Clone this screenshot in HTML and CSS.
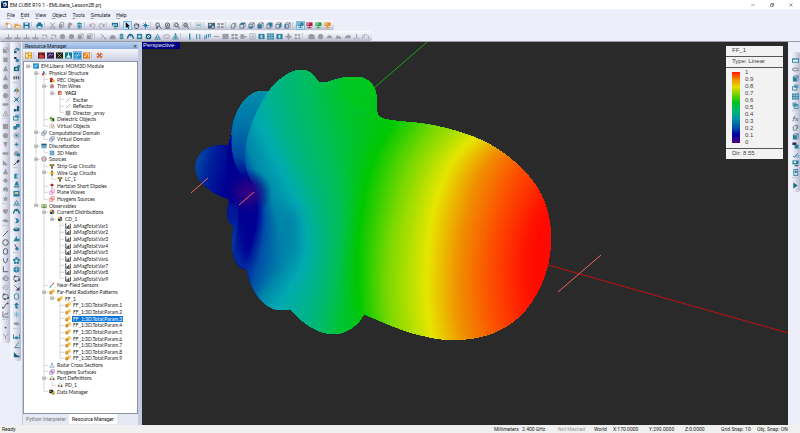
FILE: index.html
```html
<!DOCTYPE html>
<html lang="en">
<head>
<meta charset="utf-8">
<title>EM.CUBE R19.1 - EMLibera_Lesson2B.prj</title>
<link rel="stylesheet" href="styles.css">
</head>
<body>
<div class="app">
  <header class="titlebar">
    <svg class="logo" viewBox="0 0 16 16"><path fill="#0b2d5c" d="M0 0h16v16H0z"/><path fill="#3d8fd0" d="M0 0h5v4H0z"/><path fill="#fff" d="M5 5l5-2 3 2v5l-4 3-4-2z"/><path fill="#0b2d5c" d="M6 6l4 1v4l-4-1z"/></svg>
    <h1>EM.CUBE R19.1 - EMLibera_Lesson2B.prj</h1>
    <div class="window-buttons">
      <button aria-label="Minimize"><svg viewBox="0 0 16 16"><path class="line" d="M1 8h14"/></svg></button>
      <button aria-label="Restore"><svg viewBox="0 0 16 16"><path class="line" d="M2 5h9v9H2zM5 5V2h9v9h-3"/></svg></button>
      <button aria-label="Close"><svg viewBox="0 0 16 16"><path class="line" d="M2 2l12 12M14 2L2 14"/></svg></button>
    </div>
  </header>
  <nav class="menubar">
    <button><u>F</u>ile</button><button><u>E</u>dit</button><button><u>V</u>iew</button><button><u>O</u>bject</button><button><u>T</u>ools</button><button><u>S</u>imulate</button><button><u>H</u>elp</button>
  </nav>
  <div class="toolbar" data-icons="new open save | print | cut:g copy:g paste:g trash | undo:g redo:g | screen | arrow:sel hand:k orbit | zoom:k zoomdot:k zoombox:k zoomin:k | view | shade grid:g | home cubeA cubeB cubeC cubeD cubeE cubeF | board:sel board:red board:green board:orange"></div>
  <div class="toolbar" data-icons="base:g base:g base:g base:g hook:g hook:g ball:g ball:g box:g box:g | snip:g car:g cyl wave ring torus prism loop:g cone | bar pair bars dash:g block:g grid:g plug:g frame:g panel mesh panel cross:g dots:g | case:g blob:g dome:g hills:g ramp:g stand:g arch:g"></div>

  <main class="workspace">
    <div class="toolbar vertical" data-icons="box:g drum:g tri:g tri:g ball:g blob:g pill:g peak:g | square:g ball:g pin:g pill:g slope:g tri:g gem:g swirl:g star:g | heart:g leaf:g | line:k ring2:k oval:k vee:k ell:k swirl2:k swirl2:g poly:k curve:k graph:k | dot:k funnel:g"></div>
    <div class="toolbar vertical second" data-icons="move turn shape nums:k | mirror explode corner pages merge eye spark half needle | cut3 lamp picture prism wave moon pill2 slope2 spoon | flower globe poly:k resize:k oval pinup snow leaf:g | span angle hillb"></div>

    <section class="dock">
      <header class="dock-title"><h2>Resource Manager</h2><button aria-label="Close panel">✕</button></header>
      <div class="dock-tools" data-icons="m-gold | m-red m-purple m-dark m-teal m-blue:sel m-orange | m-wheel"></div>
      <ul class="tree" id="tree"></ul>
      <div class="tabs"><button>Python Interpreter</button><button class="active">Resource Manager</button></div>
    </section>

    <section class="viewport">
      <svg class="scene" viewBox="142 42 646 383" preserveAspectRatio="xMidYMid slice">
        <defs>
          <clipPath id="body"><path d="M263 91 L269 91 C278 80 290 70 301 70 C314 70 316 83 322 83 C328 83 340 76 354 77 C366 77 371 81 374 88 C379 99 376 104 377 112 C379 120 387 120 407 122 C434 124 458 130 483 141 C507 153 527 171 538 189 C547 204 551 222 551 240 C550 268 541 290 527 308 C510 329 485 340 453 340 C420 338 398 329 364 314 C358 326 346 334 333 334 C316 333 303 323 290 309 C274 313 264 305 257 295 C251 286 249 279 247 270 C236 267 232 257 232 245 C231 239 233 232 233 226 C226 222 227 213 227 210 C228 204 230 202 228 199 C215 195 206 188 200 181 C193 172 194 159 202 152 C209 145 219 145 228 146 C233 134 230 129 235 117 C241 102 251 91 263 91z"/></clipPath>
          <linearGradient id="side" gradientUnits="userSpaceOnUse" x1="250" y1="92" x2="247" y2="188"><stop offset="0" stop-color="#008cac"/><stop offset=".35" stop-color="#0074a8"/><stop offset=".68" stop-color="#0048a2"/><stop offset=".9" stop-color="#000090"/></linearGradient>
          <linearGradient id="tail" gradientUnits="userSpaceOnUse" x1="196" y1="165" x2="229" y2="174"><stop offset="0" stop-color="#0048a2"/><stop offset=".4" stop-color="#00209c"/><stop offset="1" stop-color="#000090"/></linearGradient>
          <radialGradient id="core" gradientUnits="userSpaceOnUse" cx="248" cy="193" r="24"><stop offset="0" stop-color="#360082"/><stop offset=".4" stop-color="#260084" stop-opacity=".8"/><stop offset="1" stop-color="#000090" stop-opacity="0"/></radialGradient>
          <filter id="soft" x="-50%" y="-50%" width="200%" height="200%"><feGaussianBlur stdDeviation="7"/></filter>
          <filter id="softer" x="-50%" y="-50%" width="200%" height="200%"><feGaussianBlur stdDeviation="12"/></filter>
        </defs>
        <path stroke="#14a814" d="M374 88L427 42"/>
        <path stroke="#c01010" d="M548 265L788 333"/>
        <g clip-path="url(#body)">
          <g id="contours"></g>
          <ellipse cx="358" cy="88" rx="20" ry="24" fill="#00c818" filter="url(#softer)"/>
          <ellipse cx="350" cy="325" rx="14" ry="10" fill="#00c428" filter="url(#soft)"/>
          <ellipse cx="288" cy="232" rx="9" ry="26" fill="#0080a8" filter="url(#soft)"/>
          <path d="M228 226C228 250 234 266 250 276" fill="none" stroke="#0060a8" stroke-width="8" filter="url(#soft)"/>
          <path fill="url(#tail)" d="M190 140h38L235 180 L230 204H190z"/>
          <path fill="url(#side)" d="M269 90C256 110 245 135 245 155C245 171 249 178 256 188C246 184 233 168 230 145C226 120 235 86 269 90z"/>
          <path fill="#000090" d="M228 144L232 134C229 160 241 182 256 190L232 204L226 190z"/>
          <circle cx="248" cy="193" r="24" fill="url(#core)" />
        </g>
        <path stroke="#f06464" d="M191 193L208 178M239 205L254 192M558 292L601 255"/>
      </svg>
      <span class="view-name">Perspective</span>
      <aside class="legend">
        <div class="legend-row">FF_1</div>
        <div class="legend-row">Type: Linear</div>
        <div class="legend-scale"><div class="ramp"></div>
          <ol><li>1</li><li>0.9</li><li>0.8</li><li>0.7</li><li>0.6</li><li>0.5</li><li>0.4</li><li>0.3</li><li>0.2</li><li>0.1</li><li>0</li></ol></div>
        <div class="legend-row">Dir: 8.55</div>
      </aside>
    </section>

    <div class="toolbar vertical right" data-icons="window ring3:g solid pages mesh layers | fx:k home solid pic2 tool board2 phone | play"></div>
  </main>

  <footer class="status">
    <span class="ready">Ready</span><span class="c28">Millimeters</span><span class="c36">2.400 GHz</span><span class="c36 off">Not Meshed</span><span class="c20">World</span><span class="c36">X:170.0000</span><span class="c36">Y:290.0000</span><span class="c36">Z:0.0000</span><span class="c36">Grid Snap: 10</span><span class="c42">Obj. Snap: ON</span>
  </footer>
</div>
<script src="app.js"></script>
</body>
</html>
```
FILE: styles.css
```css
* { box-sizing: border-box; }
html, body { height: 100%; margin: 0; }
body { font: 5px/6px Roboto, "Open Sans", sans-serif; color: #222; overflow: hidden; }
button { font: inherit; color: inherit; background: none; border: 0; padding: 0; margin: 0; }
h1, h2 { margin: 0; font: inherit; }
ul, ol { list-style: none; margin: 0; padding: 0; }
svg { display: block; }
.line { fill: none; stroke: #333; stroke-width: 2; }

.app { height: 100%; display: flex; flex-direction: column; background: #eceefa; }

.titlebar { display: flex; align-items: center; height: 9px; background: #fff; padding-left: 1px; }
.logo { width: 7px; height: 7px; margin-right: 2px; }
.window-buttons { margin-left: auto; display: flex; }
.window-buttons button { width: 19px; display: flex; justify-content: center; }
.window-buttons svg { width: 4px; height: 4px; }

.menubar { display: flex; align-items: center; gap: 6px; height: 11px; padding-left: 7px; border-top: 1px solid #f6f7fd; }
.menubar u { text-underline-offset: 1px; text-decoration-thickness: 1px; text-decoration-color: #9a9aa8; }

.toolbar { align-self: flex-start; display: flex; align-items: center; height: 10px; margin-bottom: 1px; padding: 0 2px 0 4px; border-radius: 2px;
  background: linear-gradient(#fafafe, #e4e6f2 50%, #b9bccf); }
.toolbar button { width: 9px; height: 9px; display: flex; align-items: center; justify-content: center; color: #28809f; flex: none; }
.toolbar svg { width: 7px; height: 7px; }
.sep { width: 4px; height: 7px; flex: none; border-left: 1px solid #c4c7d6; border-right: 1px solid transparent; background-clip: padding-box; }
.toolbar + .toolbar { margin-bottom: 0; }
.toolbar + .toolbar .sep { width: 5px; }
.toolbar button.g { color: #989aa0; }
.toolbar button.k { color: #44505c; }
.toolbar button.red { color: #b01838; }
.toolbar button.green { color: #28a048; }
.toolbar button.orange { color: #e08a18; }
.toolbar button.sel, .dock-tools button.sel { background: #cde6fa; outline: 1px solid #78b8ec; outline-offset: -1px; }

.workspace { flex: 1; min-height: 0; display: flex; align-items: stretch; border-top: 1px solid #9c9ca4; }
.toolbar.vertical { flex-direction: column; width: 10px; height: auto; margin: 0; padding: 4px 0 2px;
  background: linear-gradient(90deg, #fafafe, #dfe1ee 50%, #b9bccf); }
.toolbar.vertical .sep { width: 7px; height: 4px; border: 0; border-top: 1px solid #c4c7d6; }
.toolbar.second { margin-left: 1px; }
.toolbar.right { margin: 10px 0 0 2px; }

.dock { width: 120px; flex: none; display: flex; flex-direction: column; margin-left: 1px; padding: 0 4px 0 1px; background: #c3cbe0; }
.dock-title { display: flex; align-items: center; justify-content: space-between; height: 7px; padding: 0 1px 0 2px; background: linear-gradient(#bdd3f2, #8fb0de); }
.dock-tools { display: flex; align-items: center; height: 12px; padding-left: 1px; background: linear-gradient(#f4f5fb, #ccd0e2); }
.dock-tools button { width: 9px; height: 9px; display: flex; align-items: center; justify-content: center; }
.dock-tools svg { width: 7px; height: 7px; }
.tree { flex: 1; min-height: 0; display: grid; grid-auto-rows: 1fr; padding: 1px 0 18px; background: #fff; border: 1px solid #8c94a8;
  font: 5px/6px Lato, "Liberation Sans", sans-serif; color: #222; }
.tree li { display: flex; align-items: stretch; min-height: 0; white-space: nowrap; }
.tree .guide, .tree .node { width: 8px; flex: none; }
.tree svg { width: 8px; height: 100%; flex: none; }
.tree .icon { height: 6px; align-self: center; }
.tree .label { align-self: center; padding: 0 1px; }
.tree .strong { font-weight: 700; }
.tree .selected { background: #0a74d8; color: #fff; }
.tabs { display: flex; height: 11px; align-items: stretch; background: #e6e9f4; }
.tabs button { padding: 0 3px; color: #777; margin-bottom: 1px; }
.tabs .active { background: #fff; color: #111; }

.viewport { flex: 1; min-width: 0; position: relative; background: #2a2a2a; }
.scene { width: 100%; height: 100%; }
.view-name { position: absolute; left: 0; top: 0; padding: 0 6px 0 1px; background: #000080; color: #e8e8f4; font: 6px/7px "Liberation Sans", sans-serif; }
.legend { position: absolute; top: 4px; right: 5px; width: 57px; background: #f2f2f2; color: #444; font: 6px/7px "Liberation Sans", sans-serif; }
.legend-row { padding: 1px 6px 2px; }
.legend-row + .legend-row, .legend-scale, .legend-scale + .legend-row { border-top: 1px solid #555; }
.legend-scale { display: flex; gap: 5px; padding: 1px 6px 2px; }
.ramp { width: 8px; margin: 3px 0 3px; background: linear-gradient(#ff1400, #f08c00 10%, #e6dc00 21%, #50d000 35%, #00c020 43%, #00b478 56%, #0090a8 66%, #0050a8 78%, #0000a0 88%, #4a0080); }

.status { display: flex; align-items: center; height: 8px; background: #f0f0f0; color: #222; white-space: nowrap; }
.ready { flex: 1; padding-left: 2px; }
.off { color: #999; }
.c20 { width: 19px; }
.c28 { width: 28px; }
.c36 { width: 36px; }
.c42 { width: 43px; }
```
FILE: app.js
```js
// Icon artwork on a 16 x 16 grid. S() strokes a path, F() fills one.
const S = (d, c = "currentColor", w = 2) => `<path d="${d}" fill="none" stroke="${c}" stroke-width="${w}"/>`;
const F = (d, c = "currentColor") => `<path d="${d}" fill="${c}"/>`;
const disc = (x, y, r, c = "currentColor") => `<circle cx="${x}" cy="${y}" r="${r}" fill="${c}"/>`;
const ringAt = (x, y, r, c = "currentColor", w = 2) => `<circle cx="${x}" cy="${y}" r="${r}" fill="none" stroke="${c}" stroke-width="${w}"/>`;
const tile = c => F("M0 1h16v14H0z", c);
const cube = d => S("M2 6h8v8H2zM2 6l3-4h9v8l-4 4M10 6l4-4", "#47606e", 1.5) + F(d, "#28809f");

const icons = {
  new: F("M5 4h8l2 2v9H5z", "#fff") + S("M5 6v9h9V6l-3-2H7", "#666", 1) + disc(4, 4, 3, "#f09020"),
  open: F("M1 4h6l2 2h5v8H1z", "#e8a040") + F("M4 8h12l-2 6H2z", "#fff0c8") + S("M4 8h11l-2 6H2z", "#c07818", 1),
  save: F("M1 1h12l2 2v12H1z", "#126a96") + F("M4 1h8v5H4zM4 9h8v6H4z", "#cfe4f0"),
  print: F("M4 1h8v4H4zM1 5h14v7H1z", "#167296") + F("M4 9h8v6H4z", "#d8ecf4") + S("M4 9h8v6H4z", "#167296", 1),
  cut: S("M3 1l8 10M13 1L5 11", undefined, 2) + ringAt(4, 13, 2) + ringAt(12, 13, 2),
  copy: F("M2 5h8v10H2z") + S("M5 5V1h8v10h-3"),
  paste: F("M2 3h10v12H2zM5 1h4v2H5z") + F("M8 7h6v8H8z", "#ddd"),
  trash: F("M2 3h12v2H2zM6 1h4v2H6zM3 6h10l-1 9H4z") + S("M6 7v7M10 7v7", "#dff", 1),
  undo: S("M3 7c6-6 12-2 10 3l-4 5") + F("M1 3v7h6z"),
  redo: S("M13 7C7 1 1 5 3 10l4 5") + F("M15 3v7H9z"),
  screen: F("M2 2h14v9H2z", "#155f7c") + F("M4 4h10v5H4z", "#78b8d0") + F("M0 8h6v7H0z", "#c8dce4") + S("M7 14h6"),
  arrow: F("M4 0v14l3-3 3 5 2-1-3-5h5z", "#111"),
  hand: S("M4 9L2 7M4 10V4m3 4V2m3 6V3m3 6V5v6l-3 4H6L3 11"),
  orbit: disc(8, 8, 4) + S("M8 0v16M0 8h16M3 3l10 10", undefined, 1.5),
  zoom: ringAt(6, 6, 4) + S("M9 9l6 6") + F("M2 11h5v4H2z"),
  zoomdot: ringAt(8, 7, 5) + disc(8, 7, 2) + S("M2 14h12"),
  zoombox: S("M1 1h9v9H1z", "#8a98a4", 1) + ringAt(8, 7, 4) + S("M11 10l4 5"),
  zoomin: S("M1 1h13v13H1z", "#9aa4ac", 1) + ringAt(8, 7, 4) + S("M11 10l4 5M6 7h4"),
  view: S("M2 2h12v12H2z", "#8ba", 1) + F("M4 6h9v2H4z"),
  shade: F("M0 2h16v13H0z", "#4a6270") + F("M2 4h6v4H2zM9 9h5v4H9z", "#a8d0dc"),
  grid: F("M1 2h6v5H1zM9 2h6v5H9zM1 9h6v5H1zM9 9h6v5H9z"),
  home: S("M3 8v6h7V8M1 9l6-6 6 6M7 3h6v8", "#4a6270", 1.5),
  cubeA: cube("M2 6l3-4h9l-4 4z"), cubeB: cube("M2 10h8v4H2z"), cubeC: cube("M2 6h8v8H2z"),
  cubeD: cube("M5 2h9v8H8z"), cubeE: cube("M10 6l4-4v8l-4 4z"), cubeF: cube("M2 6h3v8H2z"),
  board: F("M1 1h14v8H1z") + S("M4 4h3M9 4h4M8 9v3M3 13h10") + S("M3 3h4v3H3z", "#fff", 1),
  base: F("M7 3h2v7H7zM1 10h14v4H1z"),
  hook: S("M2 5h11v7M1 12h7"),
  ball: disc(8, 8, 6),
  box: F("M2 5h9v9H2z") + S("M2 5l3-3h9v9l-3 3M11 5l3-3", undefined, 1.5),
  snip: S("M2 2l11 11M2 12l6-5M9 13h6"),
  car: F("M2 9l3-4h7l3 4v5H2z"),
  cyl: F("M4 2h8v12H4z") + S("M5 5h6M5 8h6M5 11h6", "#cfe6ee", 1),
  wave: S("M1 13C4 0 11 0 15 13", "#155f7c", 3) + disc(8, 6, 2),
  ring: F("M2 2h12v12H2z") + disc(8, 8, 3, "#d4ecf4"),
  torus: ringAt(8, 8, 5, "#155f7c", 3) + S("M3 3l10 10"),
  prism: F("M2 12L8 2l6 10z") + F("M5 10l3-5 3 5z", "#dceef4") + S("M1 14h14"),
  loop: `<ellipse cx="8" cy="8" rx="7" ry="4" fill="none" stroke="currentColor" stroke-width="2"/>`,
  cone: S("M8 1L2 14h12zM8 1v13M4 10h8", undefined, 1.5),
  bar: F("M7 1h3v14H7z"), pair: F("M3 2h2v12H3zM10 2h2v12h-2z"),
  bars: F("M1 5h2v10H1zM5 3h2v10H5zM9 2h2v9H9zM13 1h2v8h-2z"),
  dash: F("M2 7h12v2H2z"), block: F("M1 2h14v12H1z") + S("M4 5h3M9 10h4", "#ccc", 1),
  plug: F("M1 3h8v10H1zM9 7h6v3H9z"), frame: S("M2 2h12v12H2zM5 8h6M8 5v6", undefined, 1.5),
  panel: F("M1 2h14v12H1z") + F("M6 4h4v8H6z", "#c4e4f0"),
  mesh: F("M0 1h16v14H0z") + S("M5 1v14M11 1v14M0 5h16M0 11h16", "#e4f4fa", 1),
  cross: F("M6 1h4v5h5v4h-5v5H6v-5H1V6h5z"),
  dots: F("M2 2h4v4H2zM10 2h4v4h-4zM2 10h4v4H2zM10 10h4v4h-4z") + S("M4 4h8v8H4z", undefined, 1),
  case: F("M1 4h4V2h6v2h4v10H1z"), blob: F("M2 8l3-6 7 1 3 6-5 6-6-2z"),
  dome: F("M0 12c3-1 3-7 8-7s5 6 8 7z"), hills: F("M1 13l4-9 3 4 3-2 4 7z"), ramp: F("M1 12l5-7h9v7z"),
  stand: S("M8 2v8M2 14l6-4 6 4"), arch: S("M1 14V9c2-8 12-8 14 0v5M5 3v8", undefined, 1.5),
  drum: F("M3 3h10v11H3z") + S("M3 3h10", "#ccc", 1), tri: F("M8 1l6 13H2z"),
  pill: `<rect x="1" y="5" width="14" height="6" rx="3" fill="currentColor"/>`,
  peak: S("M2 14L8 2l6 12M8 5v9M2 14h12", undefined, 1.5), square: F("M2 2h12v12H2z"),
  pin: F("M3 2h10L8 15z"), slope: F("M2 2l12 12H2z"), gem: F("M8 2l6 6-6 6-6-6z"),
  swirl: F("M2 8c0-8 12-8 12 0S7 13 7 9l-3 4z"), star: F("M8 1l2 5h5l-4 4 2 5-5-3-5 3 2-5-4-4h5z"),
  heart: F("M8 14C-3 5 5-1 8 4c3-5 11 1 0 10z"), leaf: F("M1 9c3-6 6-1 8-6 1 5 6 3 6 6s-8 5-14 0z"),
  line: S("M2 14L14 2"), ring2: ringAt(8, 8, 6.5), oval: `<ellipse cx="8" cy="8" rx="5" ry="7" fill="none" stroke="currentColor" stroke-width="2"/>`,
  vee: S("M3 3c1 14 8 14 10 0"), ell: S("M3 1v12h11"), swirl2: S("M4 13C-2 4 9-1 13 5s-4 11-7 6 2-6 4-2", undefined, 1.5),
  poly: S("M4 3l9 1 2 7-9 4-5-6z", undefined, 1.5) + F("M2 1h4v4H2zM12 9h4v4h-4zM4 12h4v4H4z"),
  curve: S("M2 14C8 14 5 3 14 3") + disc(2, 13, 2) + disc(13, 3, 2),
  graph: S("M2 1v13h13M4 11l4-5 3 2 3-5", undefined, 1.5), dot: disc(8, 8, 2),
  funnel: S("M2 2l6 7 6-7M8 8v7"),
  move: F("M2 9l6-1v6H3z", "#155f7c") + F("M8 3h7v5H9z") + S("M3 7l6-5", "#234"),
  turn: F("M2 2h6v5H3z", "#234") + disc(10, 10, 4), shape: F("M2 4h12v10H2z", "#155f7c") + disc(13, 3, 3) + disc(8, 9, 3, "#8cc"),
  nums: F("M1 5h3v7H1zM6 5h3v7H6zM11 5h3v7h-3z"), mirror: F("M1 10l6-7v7zM9 3l6 7H9z") + S("M8 1v14", "#e89028"),
  explode: S("M2 2l12 12M14 2L2 14") + F("M5 5h6v6H5z"), corner: F("M2 9h6v6H2zM9 2h5v12H9z", "#155f7c"),
  pages: F("M5 1h10v8H5z", "#68a8c0") + S("M1 6h10v8H1z"), merge: F("M1 7h8v8H1zM7 2h8v8H7z"),
  eye: ringAt(8, 8, 6, "#7a8894", 1.5) + disc(8, 8, 3), spark: S("M8 1v14M1 8h14M3 3l10 10M13 3L3 13", "#70a8c0", 1) + disc(8, 8, 3),
  half: disc(8, 8, 6, "#9aa4b0") + F("M8 8h8v6H9z"), needle: S("M2 14l6-6", "#234") + F("M8 5l5-4 2 3-5 6z", "#234"),
  cut3: F("M3 4h8v11H3z") + F("M8 7l7-6v8l-7 6z", "#a8d4e4"), lamp: F("M7 1h3l4 9H3zM2 12h12v3H2z"),
  picture: F("M1 2h14v13H1z") + F("M4 5h8v4H4z", "#f0d890"), moon: F("M4 2c14 0 12 14 0 12 5-3 5-8 0-12z"),
  pill2: `<rect x="1" y="4" width="14" height="8" rx="4" fill="#155f7c"/><rect x="3" y="5" width="9" height="3" rx="1" fill="#78bcd4"/>`,
  slope2: F("M1 14l7-12 2 7 5-1v6z"), spoon: S("M4 1l5 8", "#234") + disc(9, 11, 4),
  flower: disc(8, 3, 3) + disc(3, 7, 3) + disc(13, 7, 3) + disc(5, 13, 3) + disc(11, 13, 3), globe: disc(8, 8, 7) + S("M1 8h14M8 1v14M3 4h10", "#cde", 1),
  resize: S("M2 2l11 11", undefined, 1.5) + F("M15 6v9H6z"), pinup: F("M8 1l6 6h-4v5h2v3H6v-3H5V7H2z"),
  snow: S("M8 1v14M2 4l12 8M14 4L2 12", "#58a8c8", 1.5) + ringAt(8, 8, 6, "#a4cfe0", 1), span: S("M1 3v11M15 3v11M1 11h14") + F("M5 8h6v6H5z"),
  angle: S("M13 1L4 13h11"), hillb: F("M2 14V3l8 7 5 1v3z", "#155f7c"),
  window: F("M0 3h16v10H0z") + F("M2 6h12v5H2z", "#e4f4fa"), ring3: `<ellipse cx="8" cy="8" rx="7" ry="3" fill="none" stroke="currentColor" stroke-width="3"/>`,
  solid: F("M2 5h9v10H2z") + S("M2 5l3-3h9v10l-3 3M11 5l3-3", "#155f7c", 1.5), layers: F("M1 1h9v9H1z", "#68a8c0") + S("M5 6h9v9H5z") + disc(9, 9, 2),
  fx: S("M1 14c4 1 2-12 7-12M2 7h6M8 7l6 7M14 7l-6 7", undefined, 1.5), pic2: F("M1 1h9v6H1z", "#234") + F("M6 6h9v9H6z"),
  tool: S("M2 12l4 2 7-9", undefined) + S("M8 10h7v4H8z", undefined, 1), board2: F("M1 1h14v9H1z") + F("M4 3h5v4H4z", "#dff") + S("M6 13h8", "#234"),
  phone: S("M4 1h9v14H4z") + F("M6 4h5v5H6z"), play: F("M3 1l10 7-10 7z", "#137078"),

  "m-gold": tile("#d8a020") + F("M2 4h4v8H2zM9 3h4v4H9zM8 10h5v3H8z", "#fff0c0"), "m-red": tile("#6e1c1c") + F("M3 8l3-4 3 4h4v5H3z", "#d04840"),
  "m-purple": tile("#38204c") + S("M2 11l5-7 3 4 4-4", "#b888d0"), "m-dark": tile("#18241c") + S("M3 3l10 10M13 3L3 13", "#c8c860", 1.5),
  "m-teal": tile("#147888") + F("M7 2h2v5l5 6H2l5-6z", "#d8f4f4"), "m-blue": tile("#1888c8") + S("M1 9l5-3 4 4 5-5M3 14L12 2", "#d8f4ff", 1.5),
  "m-orange": tile("#f07818") + S("M2 10h5V4h6v8", "#fff0d0"), "m-wheel": disc(8, 8, 7, "#e07838") + S("M8 1v14M1 8h14", "#fff0d8", 2) + disc(8, 8, 3, "#9858a0"),

  "t-struct": F("M6 2l5 4-2 4H4z", "#3c78c8") + F("M2 9l6-1 1 5-5 2z", "#d84030") + F("M9 9h6v4H9z", "#b8c8d8"),
  "t-pec": F("M2 3l6-2 3 5v5H3z", "#c03828") + F("M8 8h7v6H8z", "#e8a040") + F("M3 10h5v4H3z", "#602018"),
  "t-thin": F("M2 5l6-3 6 5-2 7H4z", "#c89890") + S("M3 13L12 3M6 14l7-7", "#804840", 1),
  "t-yagi": F("M3 3h9v10H3z", "#d03020") + F("M6 6h7v6H6z", "#f0b8a8"), "t-line": S("M3 13L13 3", "#777", 1.5),
  "t-array": F("M2 2h12v12H2z", "#666") + S("M5 2v12M8 2v12M11 2v12M2 5h12M2 8h12M2 11h12", "#ddd", 1),
  "t-diel": F("M2 3h6v6H2z", "#48a030") + F("M8 6h6v8H8z", "#183c18") + F("M4 9h6v5H4z", "#70d048"),
  "t-virt": S("M2 5h6v8H2zM6 2h6v9H6z", "#d08870", 1) + S("M10 6h4v8h-4z", "#6890b0", 1),
  "t-dom": S("M2 6h8v8H2zM6 2h8v8H6z", "#506890", 1.5), "t-disc": F("M1 2h14v12H1z", "#68a8d0") + F("M1 2h14v4H1z", "#28607c"),
  "t-mesh": F("M2 2h12v12H2z", "#4088c0") + S("M2 6h12M2 10h12M6 2v12M10 2v12", "#b8dcf0", 1),
  "t-src": ringAt(8, 8, 6, "#555", 2) + S("M4 10l3-4 3 4 3-4", "#c03030", 1.5), "t-gap": F("M2 3h12v5H2zM6 8h4v7H6z", "#504020") + F("M4 4h8v3H4z", "#e8c030"),
  "t-wire": F("M6 1h4v14H6z", "#604818") + F("M2 6h12v4H2z", "#f0b820"), "t-dip": F("M7 7h2v8H7z", "#666") + F("M4 3l4-2 4 2v5H4z", "#b02828"),
  "t-plane": S("M2 6h8v8H2zM6 2h8v8H6z", "#d060c0", 1.5), "t-huy": S("M2 6h8v8H2zM6 2h8v8H6z", "#e04040", 1.5),
  "t-obs": F("M1 3h14v11H1z", "#80a850") + F("M3 5h10v5H3z", "#d0e8c0") + S("M6 12l3-6 3 6", "#305020", 1.5),
  "t-cd": disc(8, 8, 6, "#302048") + F("M8 2a6 6 0 0 0-6 6h6z", "#e8c830") + F("M8 14a6 6 0 0 0 6-6H8z", "#48a048") + F("M8 2a6 6 0 0 1 6 6H8z", "#b040a0"),
  "t-plot": S("M2 1v13h13", "#111", 2) + F("M5 8h2v5H5zM9 5h2v8H9zM13 2h2v11h-2z", "#111"), "t-near": S("M3 14L12 3", "#3050c0", 2) + disc(12, 4, 2, "#d05030") + F("M2 10h3v5H2z", "#6a8"),
  "t-far": ringAt(5, 10, 3, "#c87808", 3) + ringAt(11, 5, 3, "#f0b020", 3), "t-radar": disc(8, 5, 3, "#88b8d8") + S("M2 14c1-6 11-6 12 0z", "#6088a8", 1.5),
  "t-hs": S("M2 6h8v8H2zM6 2h8v8H6z", "#8048a8", 1.5), "t-port": S("M2 12c2-10 10-10 12 0", "#50a050", 1.5) + F("M3 9h4v4H3z", "#c03020") + F("M10 9h4v4h-4z", "#303030"),
  "t-data": F("M1 2h10v9H1z", "#181818") + F("M3 4h3v3H3z", "#e8d030") + F("M8 7h6v7H8z", "#e8d030") + S("M8 7h6v7H8z", "#222", 1)
};

const svg = (name, cls = "") => `<svg class="${cls}" viewBox="0 0 16 16">${name === "t-root" ? icons["m-blue"] : icons[name]}</svg>`;

document.querySelectorAll("[data-icons]").forEach(bar => {
  bar.innerHTML = bar.dataset.icons.split(" ").map(item => {
    if (item === "|") return '<span class="sep"></span>';
    const [name, tone = ""] = item.split(":");
    return `<button class="${tone}" aria-label="${name}">${svg(name)}</button>`;
  }).join("");
});

// Each row: depth, icon, label, "+" when the row has an expander.
const series = (n, depth, icon, text) => Array.from({ length: n }, (_, i) => [depth, icon, text + (i + 1)]);
const rows = [
  [0, "root", "EM.Libera: MOM3D Module", "+"], [1, "struct", "Physical Structure", "+"], [2, "pec", "PEC Objects"],
  [2, "thin", "Thin Wires", "+"], [3, "yagi", "YAGI", "+"], [4, "line", "Exciter"], [4, "line", "Reflector"], [4, "array", "Director_array"],
  [2, "diel", "Dielectric Objects"], [2, "virt", "Virtual Objects"], [1, "dom", "Computational Domain", "+"], [2, "dom", "Virtual Domain"],
  [1, "disc", "Discretization", "+"], [2, "mesh", "3D Mesh"], [1, "src", "Sources", "+"], [2, "gap", "Strip Gap Circuits"],
  [2, "wire", "Wire Gap Circuits", "+"], [3, "gap", "LC_1"], [2, "dip", "Hertzian Short Dipoles"], [2, "plane", "Plane Waves"],
  [2, "huy", "Huygens Sources"], [1, "obs", "Observables", "+"], [2, "cd", "Current Distributions", "+"], [3, "cd", "CD_1", "+"],
  ...series(9, 4, "plot", "JsMagTotal:Var"), [2, "near", "Near-Field Sensors"], [2, "far", "Far-Field Radiation Patterns", "+"],
  [3, "far", "FF_1", "+"], ...series(9, 4, "far", "FF_1:3D.Total:Param."), [2, "radar", "Radar Cross Sections"],
  [2, "hs", "Huygens Surfaces"], [2, "port", "Port Definitions", "+"], [3, "port", "PD_1"], [2, "data", "Data Manager"]
];
const continues = (i, depth) => {
  for (let j = i + 1; j < rows.length && rows[j][0] >= depth; j++) if (rows[j][0] === depth) return true;
  return false;
};
const branch = d => `<svg viewBox="0 0 8 7" preserveAspectRatio="none"><path d="${d}" fill="none" stroke="#b8b8b8" stroke-width=".6"/></svg>`;
document.getElementById("tree").innerHTML = rows.map(([depth, icon, label, expander], i) => {
  let cells = "";
  for (let d = 1; d < depth; d++) cells += continues(i, d) ? branch("M4 0V7") : '<span class="guide"></span>';
  if (depth > 0) cells = '<span class="guide"></span>' + cells;
  const more = depth > 0 && continues(i, depth);
  const link = depth ? `M4 0V${more ? 7 : 3.5}M4 3.5H8` : "M4 3.5H8";
  const box = expander ? '<path d="M2.5 2h3v3h-3z" fill="#fff" stroke="#999" stroke-width=".6"/><path d="M3 3.5h2" stroke="#333" stroke-width=".6"/>' : "";
  cells += branch(link).replace("</svg>", box + "</svg>");
  const cls = ["label", label === "YAGI" && "strong", label.endsWith("Param.3") && "selected"].filter(Boolean).join(" ");
  return `<li>${cells}${svg("t-" + icon, "icon")}<span class="${cls}">${label}</span></li>`;
}).join("");

// Field contours: x position of each level at the heights below, blended pairwise into fine bands.
const heights = [60, 110, 160, 210, 260, 310, 350];
const levels = [
  [[0, 0, 144], [190, 205, 222, 238, 232, 220, 212]],
  [[0, 0, 150], [205, 222, 236, 257, 245, 232, 225]],
  [[0, 80, 168], [215, 230, 242, 264, 259, 244, 235]],
  [[0, 134, 170], [225, 238, 252, 275, 283, 254, 245]],
  [[0, 170, 178], [238, 252, 276, 298, 303, 276, 262]],
  [[0, 180, 134], [272, 280, 296, 316, 320, 310, 300]],
  [[0, 192, 80], [318, 322, 335, 342, 339, 334, 330]],
  [[0, 200, 0], [410, 398, 372, 361, 357, 359, 366]],
  [[120, 216, 0], [480, 445, 412, 395, 387, 387, 395]],
  [[230, 230, 0], [545, 502, 453, 433, 427, 427, 434]],
  [[240, 144, 0], [600, 545, 488, 466, 458, 458, 466]],
  [[252, 80, 0], [650, 580, 525, 500, 490, 492, 502]],
  [[255, 24, 0], [700, 630, 572, 535, 522, 526, 542]],
  [[255, 8, 0], [720, 660, 595, 552, 538, 545, 565]]
];
const mix = (a, b, t) => a.map((v, i) => v + (b[i] - v) * t);
const smooth = xs => {
  const p = xs.map((x, i) => [x, heights[i]]);
  let d = `M${p[0]}`;
  for (let i = 0; i < p.length - 1; i++) {
    const a = p[i - 1] || p[i], b = p[i], c = p[i + 1], e = p[i + 2] || c;
    d += `C${b[0] + (c[0] - a[0]) / 6} ${b[1] + (c[1] - a[1]) / 6} ${c[0] - (e[0] - b[0]) / 6} ${c[1] - (e[1] - b[1]) / 6} ${c}`;
  }
  return d + "H800V60z";
};
let bands = '<path fill="rgb(0,24,152)" d="M180 60H800V350H180z"/>';
for (let i = 0; i < levels.length - 1; i++) {
  for (let s = 0; s < 24; s++) {
    const rgb = mix(levels[i][0], levels[i + 1][0], s / 24).map(Math.round);
    bands += `<path fill="rgb(${rgb})" d="${smooth(mix(levels[i][1], levels[i + 1][1], s / 24))}"/>`;
  }
}
document.getElementById("contours").innerHTML = bands;
```
